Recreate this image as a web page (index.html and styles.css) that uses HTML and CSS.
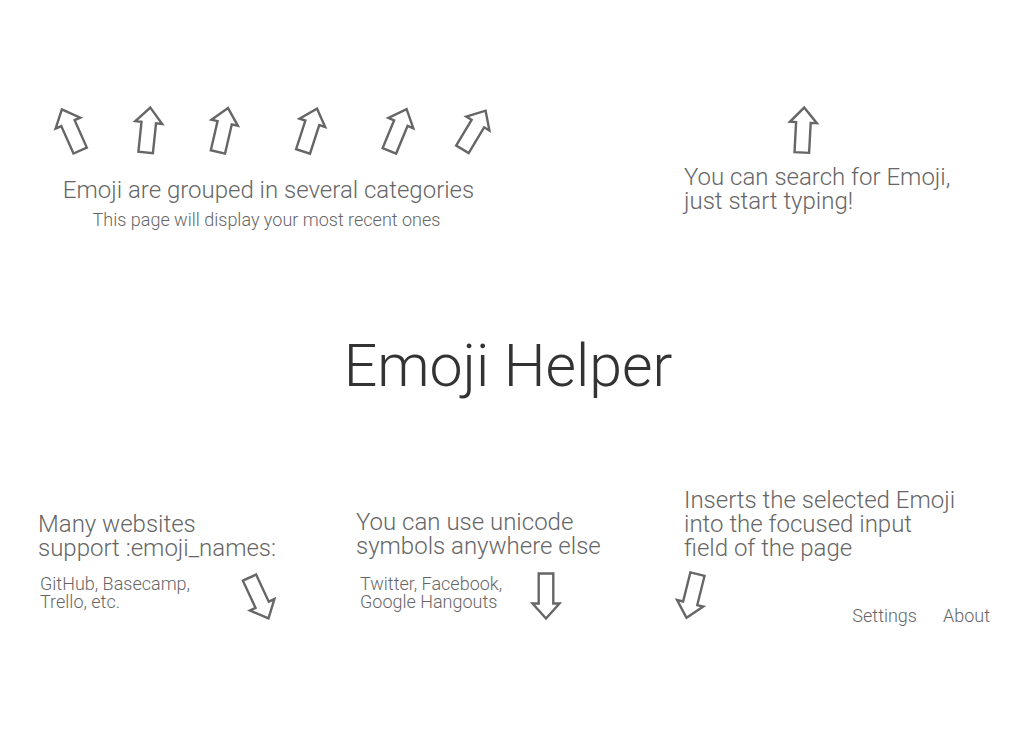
FILE: index.html
```html
<!DOCTYPE html>
<html lang="en">
<head>
<meta charset="utf-8">
<title>Emoji Helper</title>
<link rel="stylesheet" href="styles.css">
</head>
<body>
<svg class="defs" aria-hidden="true">
  <symbol id="arrow" viewBox="0 0 32 48" overflow="visible"><path d="M16 1.5 L29.5 16.5 H23.3 V46.5 H8.7 V16.5 H2.5 Z"/></symbol>
</svg>
<main class="page">
  <div class="top">
    <section class="categories">
      <div class="arrow-row">
        <svg class="arrow" viewBox="0 0 32 48"><use href="#arrow" transform="rotate(-24 16 24)"/></svg>
        <svg class="arrow" viewBox="0 0 32 48"><use href="#arrow" transform="rotate(6 16 24)"/></svg>
        <svg class="arrow" viewBox="0 0 32 48"><use href="#arrow" transform="rotate(13 16 24)"/></svg>
        <svg class="arrow" viewBox="0 0 32 48"><use href="#arrow" transform="rotate(18 16 24)"/></svg>
        <svg class="arrow" viewBox="0 0 32 48"><use href="#arrow" transform="rotate(22.5 16 24)"/></svg>
        <svg class="arrow" viewBox="0 0 32 48"><use href="#arrow" transform="rotate(31 16 24)"/></svg>
      </div>
      <h2 class="lead categories-lead">Emoji are grouped in several categories</h2>
      <p class="note categories-note">This page will display your most recent ones</p>
    </section>
    <section class="search">
      <svg class="arrow search-arrow" viewBox="0 0 32 48"><use href="#arrow" transform="rotate(3 16 24)"/></svg>
      <h2 class="lead">You can search for Emoji,<br>just start typing!</h2>
    </section>
  </div>

  <div class="hero">
    <h1 class="title">Emoji Helper</h1>
  </div>

  <div class="bottom">
    <section class="names">
      <h2 class="lead">Many websites<br>support :emoji_names:</h2>
      <div class="detail">
        <p class="note">GitHub, Basecamp,<br>Trello, etc.</p>
        <svg class="arrow" viewBox="0 0 32 48"><use href="#arrow" transform="rotate(155 16 24)"/></svg>
      </div>
    </section>
    <section class="unicode">
      <h2 class="lead">You can use unicode<br>symbols anywhere else</h2>
      <div class="detail">
        <p class="note">Twitter, Facebook,<br>Google Hangouts</p>
        <svg class="arrow" viewBox="0 0 32 48"><use href="#arrow" transform="rotate(180 16 24)"/></svg>
      </div>
    </section>
    <section class="insert">
      <h2 class="lead">Inserts the selected Emoji<br>into the focused input<br>field of the page</h2>
      <div class="detail">
        <svg class="arrow" viewBox="0 0 32 48"><use href="#arrow" transform="rotate(194 16 24)"/></svg>
        <nav class="links">
          <a class="link" href="#settings">Settings</a>
          <a class="link" href="#about">About</a>
        </nav>
      </div>
    </section>
  </div>
</main>
</body>
</html>
```
FILE: styles.css
```css
* {
  box-sizing: border-box;
}

body {
  margin: 0;
  background: #fff;
  color: #666;
  font-family: Roboto, "Liberation Sans", sans-serif;
  font-weight: 300;
}

h1, h2, p {
  margin: 0;
  font-weight: 300;
}

.defs {
  position: absolute;
  width: 0;
  height: 0;
}

.page {
  display: flex;
  flex-direction: column;
  min-height: 100vh;
  padding: 106px 30px 115px 38px;
}

.top {
  display: grid;
  grid-template-columns: 646fr 306fr;
}

.arrow {
  display: block;
  flex: none;
  width: 32px;
  height: 48px;
  overflow: visible;
  fill: none;
  stroke: #666;
  stroke-width: 2.4;
}

.arrow-row {
  display: grid;
  grid-template-columns: 77px 75px 87px 88px 76px 32px;
  justify-content: center;
  margin-bottom: 24px;
}

.categories {
  width: max-content;
  padding-left: 17px;
  text-align: center;
}

.categories-lead {
  padding-right: 8px;
}

.categories-note {
  margin-top: 9px;
  padding-right: 12px;
}

.lead {
  font-size: 24px;
  line-height: 24px;
}

.note {
  font-size: 18px;
  line-height: 18px;
}

.search-arrow {
  margin: 0 0 11px 103px;
}

.hero {
  display: flex;
  flex: 1;
  align-items: center;
  justify-content: center;
  padding: 15px 12px 0 0;
}

.title {
  color: #333;
  font-size: 59px;
  line-height: 60px;
}

.bottom {
  display: grid;
  grid-template-columns: 318fr 328fr 306fr;
  align-items: end;
}

.detail {
  display: flex;
  align-items: flex-start;
  margin-top: 14px;
}

.names {
  padding-bottom: 3px;
}

.names .detail {
  gap: 53px;
  padding: 0 0 0 2px;
}

.names .note {
  padding-top: 1px;
}

.unicode {
  padding-bottom: 5px;
}

.unicode .detail {
  gap: 28px;
  padding-left: 4px;
}

.unicode .note {
  padding-top: 3px;
}

.insert .detail {
  justify-content: space-between;
  margin: 12px 0 0 -8px;
}

.links {
  display: flex;
  gap: 26px;
  padding-top: 35px;
}

.link {
  color: #666;
  font-size: 18px;
  line-height: 18px;
  text-decoration: none;
}
```
